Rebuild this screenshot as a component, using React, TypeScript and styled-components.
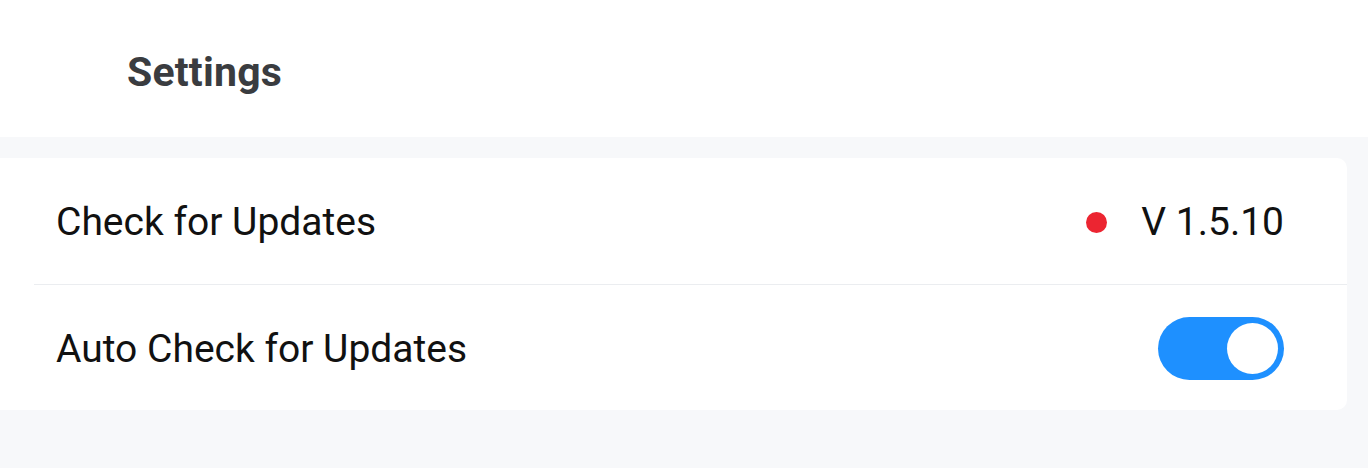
import React, { useState } from 'react';
import styled, { createGlobalStyle } from 'styled-components';

const GlobalStyle = createGlobalStyle`
  html, body {
    margin: 0;
    padding: 0;
    background: #f7f8fa;
    font-family: Roboto, "Noto Sans", sans-serif;
  }
`;

const Page = styled.div`
  width: 1368px;
  height: 468px;
  overflow: hidden;
  background: #f7f8fa;
`;

const Header = styled.header`
  height: 137px;
  background: #ffffff;
  display: flex;
  align-items: center;
  padding: 6px 0 0 127px;
  box-sizing: border-box;
`;

const Title = styled.h1`
  margin: 0;
  font-size: 41px;
  font-weight: 700;
  color: #3a3c40;
  letter-spacing: 0.2px;
`;

const Card = styled.section`
  margin: 21px 21px 0 -21px;
  background: #ffffff;
  border-radius: 10px;
  padding-left: 55px;
`;

const Row = styled.div<{ $first?: boolean }>`
  height: 126px;
  display: flex;
  align-items: center;
  justify-content: space-between;
  padding: 2px 63px 0 22px;
  box-sizing: border-box;
  border-top: ${(p) => (p.$first ? 'none' : '1px solid #ebedf0')};
`;

const Label = styled.span`
  font-size: 39px;
  color: #111111;
`;

const Value = styled.div`
  display: flex;
  align-items: center;
  gap: 34px;
  font-size: 39px;
  color: #111111;
`;

const Dot = styled.span`
  width: 21px;
  height: 21px;
  border-radius: 50%;
  background: #ec2531;
`;

const Switch = styled.button<{ $on: boolean }>`
  width: 126px;
  height: 63px;
  border: none;
  padding: 0;
  border-radius: 32px;
  background: ${(p) => (p.$on ? '#1e90ff' : '#d9dbe0')};
  position: relative;
  cursor: pointer;
`;

const Knob = styled.span<{ $on: boolean }>`
  position: absolute;
  top: 6px;
  left: ${(p) => (p.$on ? '69px' : '6px')};
  width: 51px;
  height: 51px;
  border-radius: 50%;
  background: #ffffff;
`;

const App = () => {
  const [auto, setAuto] = useState(true);
  return (
    <Page>
      <GlobalStyle />
      <Header>
        <Title>Settings</Title>
      </Header>
      <Card>
        <Row $first>
          <Label>Check for Updates</Label>
          <Value>
            <Dot />
            V 1.5.10
          </Value>
        </Row>
        <Row>
          <Label>Auto Check for Updates</Label>
          <Switch $on={auto} onClick={() => setAuto(!auto)}>
            <Knob $on={auto} />
          </Switch>
        </Row>
      </Card>
    </Page>
  );
};

export default App;
